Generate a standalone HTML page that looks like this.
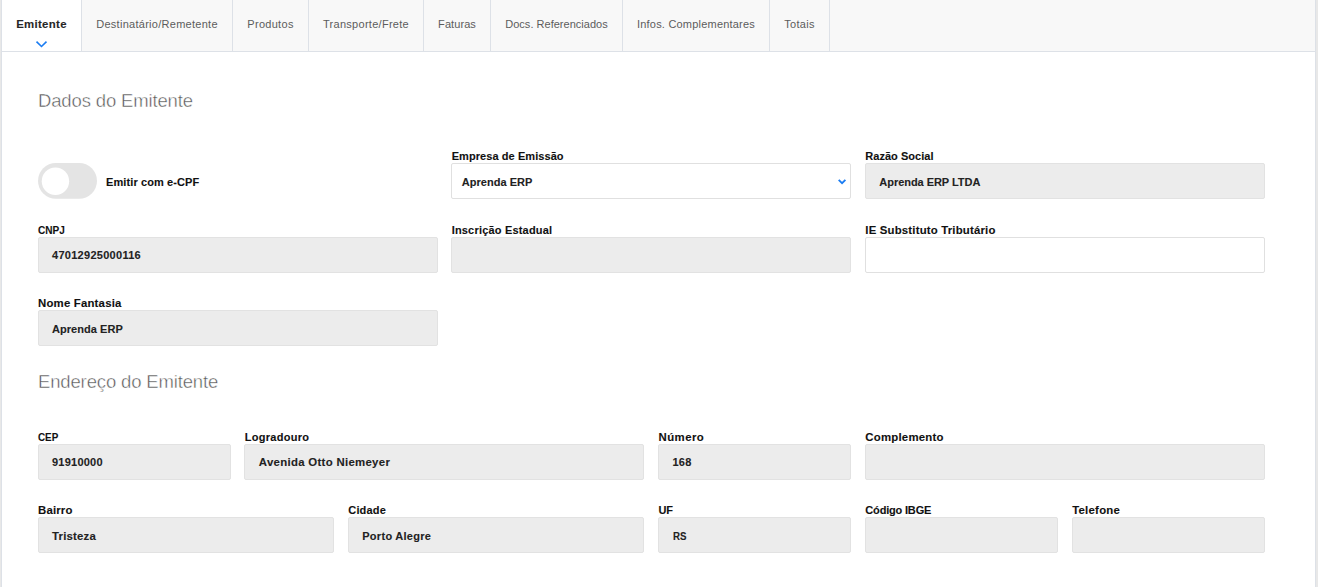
<!DOCTYPE html>
<html lang="pt-BR">
<head>
<meta charset="utf-8">
<title>Emitente</title>
<style>
*{box-sizing:border-box;margin:0;padding:0}
html,body{width:1318px;height:587px;overflow:hidden;background:#e8e8e8;font-family:"Liberation Sans",sans-serif;}
#panel{position:absolute;left:1px;top:-1px;width:1315px;height:600px;background:#fff;border:1px solid #dde1e7;}
#tabs{position:absolute;left:0;top:0;width:1313px;height:52px;background:#f8f8f8;border-bottom:1px solid #dde1e7;}
.tab{position:absolute;top:0;height:51px;border-right:1px solid #dde1e7;font-size:11px;color:#5c5c5c;text-align:center;line-height:16px;padding-top:16px;white-space:nowrap;}
.tab.active{background:#fff;height:52px;font-weight:bold;color:#262626;-webkit-text-stroke:0.1px #262626;border-bottom:1px solid #dde1e7}
.tab svg{position:absolute;left:33px;top:40px}
h3{position:absolute;font-weight:normal;font-size:18.5px;color:#555;-webkit-text-stroke:0.45px #fff;white-space:nowrap;line-height:22px;letter-spacing:0}
.lbl{position:absolute;font-size:11px;font-weight:bold;color:#111;-webkit-text-stroke:0.1px #111;white-space:nowrap;line-height:14px}
.inp{position:absolute;height:36px;border:1px solid #e2e2e2;background:#ececec;border-radius:2px;font-size:11px;font-weight:bold;color:#222;-webkit-text-stroke:0.1px #222;line-height:14px;padding:10px 0 0 13px;white-space:nowrap}
.sx{display:inline-block;transform-origin:0 50%;font-weight:bold}
.inp.w{background:#fff;border-color:#e0e0e0}
.inp.sel{padding-left:9px}
.inp.d1{padding-top:11px}
#tog{position:absolute;left:36px;top:163px}
</style>
</head>
<body>
<div id="panel">
<div id="tabs">
<div class="tab active" style="left:0;width:80px"><span style="font-size:11.4px;letter-spacing:0.313px">Emitente</span><svg width="13" height="9" viewBox="0 0 13 9"><path d="M1.5 1.7 L6.5 6.5 L11.5 1.7" fill="none" stroke="#1a7cf2" stroke-width="1.6"/></svg></div>
<div class="tab" style="left:80px;width:151px"><span style="letter-spacing:0.274px">Destinatário/Remetente</span></div>
<div class="tab" style="left:231px;width:76px"><span style="letter-spacing:0.295px">Produtos</span></div>
<div class="tab" style="left:307px;width:115px"><span style="letter-spacing:0.277px">Transporte/Frete</span></div>
<div class="tab" style="left:422px;width:67px"><span style="letter-spacing:0.073px">Faturas</span></div>
<div class="tab" style="left:489px;width:132px"><span style="letter-spacing:0.022px">Docs. Referenciados</span></div>
<div class="tab" style="left:621px;width:147px"><span style="letter-spacing:0.205px">Infos. Complementares</span></div>
<div class="tab" style="left:768px;width:60px"><span style="letter-spacing:0.263px">Totais</span></div>
</div>

<h3 style="left:36px;top:90px"><span style="letter-spacing:-0.145px">Dados do Emitente</span></h3>

<svg id="tog" width="60" height="37" viewBox="0 0 60 37"><rect x="0" y="0" width="59" height="35.8" rx="17.9" fill="#e4e4e4"/><circle cx="17.45" cy="18.3" r="13.7" fill="#fff"/></svg>
<div class="lbl" style="left:104px;top:175px"><span style="letter-spacing:0.103px">Emitir com e-CPF</span></div>

<div class="lbl" style="left:449.67px;top:149px"><span style="letter-spacing:0.074px">Empresa de Emissão</span></div>
<div class="inp w sel d1" style="left:449px;top:163px;padding-left:9.67px;width:400px"><span style="letter-spacing:0.044px">Aprenda ERP</span><svg style="position:absolute;right:2px;top:13px" width="12" height="10" viewBox="0 0 12 10"><path d="M2.7 2.8 L6.05 6.15 L9.4 2.8" fill="none" stroke="#1a7cf2" stroke-width="1.8"/></svg></div>

<div class="lbl" style="left:863.33px;top:149px"><span style="letter-spacing:0.024px">Razão Social</span></div>
<div class="inp d1" style="left:863px;top:163px;padding-left:13.33px;width:400px"><span style="letter-spacing:-0.042px">Aprenda ERP LTDA</span></div>

<div class="lbl" style="left:36px;top:223px"><b class="sx" style="transform:scaleX(0.913)"><span style="letter-spacing:-0.001px">CNPJ</span></b></div>
<div class="inp" style="left:36px;top:237px;width:400px"><span style="letter-spacing:0.282px">47012925000116</span></div>

<div class="lbl" style="left:449.67px;top:223px"><span style="letter-spacing:0.191px">Inscrição Estadual</span></div>
<div class="inp" style="left:449px;top:237px;width:400px"></div>

<div class="lbl" style="left:863.33px;top:223px"><span style="font-size:11.4px;letter-spacing:0.180px">IE Substituto Tributário</span></div>
<div class="inp w" style="left:863px;top:237px;width:400px"></div>

<div class="lbl" style="left:36px;top:296px"><span style="font-size:11.4px;letter-spacing:0.194px">Nome Fantasia</span></div>
<div class="inp d1" style="left:36px;top:310px;width:400px"><span style="letter-spacing:0.044px">Aprenda ERP</span></div>

<h3 style="left:36px;top:371px"><span style="letter-spacing:-0.146px">Endereço do Emitente</span></h3>

<div class="lbl" style="left:36px;top:430px"><b class="sx" style="transform:scaleX(0.896)"><span style="letter-spacing:0.004px">CEP</span></b></div>
<div class="inp" style="left:36px;top:444px;width:193px"><span style="letter-spacing:0.235px">91910000</span></div>
<div class="lbl" style="left:242.83px;top:430px"><span style="letter-spacing:0.261px">Logradouro</span></div>
<div class="inp" style="left:242px;top:444px;padding-left:13.83px;width:400px"><span style="font-size:11.4px;letter-spacing:0.304px">Avenida Otto Niemeyer</span></div>
<div class="lbl" style="left:656.5px;top:430px"><span style="font-size:11.4px;letter-spacing:0.447px">Número</span></div>
<div class="inp" style="left:656px;top:444px;padding-left:13.50px;width:193px"><span style="letter-spacing:0.236px">168</span></div>
<div class="lbl" style="left:863.33px;top:430px"><span style="font-size:11.4px;letter-spacing:0.217px">Complemento</span></div>
<div class="inp" style="left:863px;top:444px;width:400px"></div>

<div class="lbl" style="left:36px;top:503px"><span style="font-size:11.4px;letter-spacing:0.164px">Bairro</span></div>
<div class="inp d1" style="left:36px;top:517px;width:296px"><span style="font-size:11.4px;letter-spacing:0.187px">Tristeza</span></div>
<div class="lbl" style="left:346.25px;top:503px"><span style="letter-spacing:0.187px">Cidade</span></div>
<div class="inp d1" style="left:346px;top:517px;padding-left:13.25px;width:296px"><span style="letter-spacing:0.282px">Porto Alegre</span></div>
<div class="lbl" style="left:656.5px;top:503px"><span style="letter-spacing:-0.083px">UF</span></div>
<div class="inp d1" style="left:656px;top:517px;padding-left:13.50px;width:193px"><b class="sx" style="transform:scaleX(0.882)"><span style="letter-spacing:-0.008px">RS</span></b></div>
<div class="lbl" style="left:863.33px;top:503px"><span style="letter-spacing:-0.181px">Código IBGE</span></div>
<div class="inp d1" style="left:863px;top:517px;width:193px"></div>
<div class="lbl" style="left:1070.17px;top:503px"><span style="font-size:11.4px;letter-spacing:0.251px">Telefone</span></div>
<div class="inp d1" style="left:1070px;top:517px;width:193px"></div>
</div>
</body>
</html>
